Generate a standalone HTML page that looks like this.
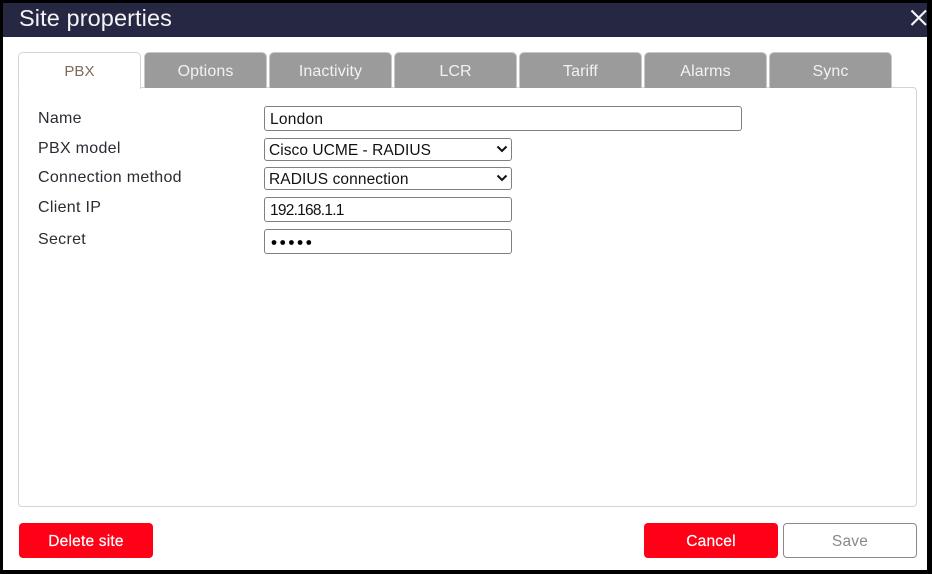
<!DOCTYPE html>
<html>
<head>
<meta charset="utf-8">
<style>
html,body{margin:0;padding:0;width:932px;height:574px;overflow:hidden;background:#000;}
*{box-sizing:border-box;}
body{font-family:"Liberation Sans",sans-serif;position:relative;}
div{position:absolute;white-space:nowrap;}
.dlg{left:3px;top:3px;width:924px;height:567px;background:#fff;}
.hdr{left:3px;top:3px;width:924px;height:34px;background:#262843;}
.title{left:19px;top:4px;height:28px;line-height:28px;font-size:23.5px;color:#f4f4f6;letter-spacing:.1px;}
.panel{left:18px;top:87px;width:899px;height:420px;border:1px solid #d4d4d4;border-radius:4px;background:#fff;}
.tab{top:52px;width:123px;height:36px;background:#9b9b9b;border:1px solid #c8c8c8;border-bottom:none;border-radius:5px 5px 0 0;color:#f2f2f2;font-size:16px;line-height:37px;text-align:center;letter-spacing:.1px;}
.tab.on{background:#fff;color:#7d6a5c;border-color:#d4d4d4;height:37px;font-size:15px;}
.lab{left:38px;font-size:16px;line-height:18px;color:#2b2b33;letter-spacing:.3px;}
.box{left:264px;width:248px;border:1px solid #808080;border-radius:3px;background:#fff;color:#111;font-size:15.5px;letter-spacing:.25px;padding-left:5px;}
.btn{top:523px;height:35px;border-radius:4px;background:#ff0016;color:#fff;font-size:15.5px;line-height:37px;text-align:center;letter-spacing:.2px;-webkit-text-stroke:.2px #fff;}
svg{position:absolute;}
</style>
</head>
<body>
<div class="dlg"></div>
<div class="hdr"></div>
<div class="title">Site properties</div>
<svg style="left:908px;top:7px" width="20" height="22" viewBox="0 0 20 22"><path d="M3.500 3.500L18 18M18 3.500L3.500 18" stroke="#f4f4f6" stroke-width="2.200" fill="none"/></svg>

<div class="panel"></div>
<div class="tab on" style="left:18px;">PBX</div>
<div class="tab" style="left:144px;">Options</div>
<div class="tab" style="left:269px;">Inactivity</div>
<div class="tab" style="left:394px;">LCR</div>
<div class="tab" style="left:519px;">Tariff</div>
<div class="tab" style="left:644px;">Alarms</div>
<div class="tab" style="left:769px;">Sync</div>

<div class="lab" style="top:110px;">Name</div>
<div class="lab" style="top:140px;">PBX model</div>
<div class="lab" style="top:169px;">Connection method</div>
<div class="lab" style="top:199px;">Client IP</div>
<div class="lab" style="top:231px;">Secret</div>

<div class="box" style="top:106px;width:478px;height:25px;line-height:25px;">London</div>
<div class="box" style="top:138px;height:23px;line-height:23px;padding-left:4px;letter-spacing:.05px;">Cisco UCME - RADIUS</div>
<svg style="left:496px;top:145px" width="12" height="9" viewBox="0 0 12 9"><path d="M1.500 1.500L6 6L10.500 1.500" stroke="#111" stroke-width="2" fill="none"/></svg>
<div class="box" style="top:167px;height:23px;line-height:23px;padding-left:4px;letter-spacing:.1px;">RADIUS connection</div>
<svg style="left:496px;top:174px" width="12" height="9" viewBox="0 0 12 9"><path d="M1.500 1.500L6 6L10.500 1.500" stroke="#111" stroke-width="2" fill="none"/></svg>
<div class="box" style="top:197px;height:25px;line-height:25px;letter-spacing:-.75px;">192.168.1.1</div>
<div class="box" style="top:229px;height:25px;"></div>
<svg style="left:270px;top:238px" width="44" height="9" viewBox="0 0 44 9"><g fill="#000"><circle cx="4" cy="4.500" r="2.400"/><circle cx="12.700" cy="4.500" r="2.400"/><circle cx="21.400" cy="4.500" r="2.400"/><circle cx="30.100" cy="4.500" r="2.400"/><circle cx="38.800" cy="4.500" r="2.400"/></g></svg>

<div class="btn" style="left:19px;width:134px;">Delete site</div>
<div class="btn" style="left:644px;width:134px;">Cancel</div>
<div class="btn" style="left:783px;width:134px;background:#fff;border:1px solid #8a8a8a;color:#8a8a8a;line-height:35px;-webkit-text-stroke:0;">Save</div>
</body>
</html>
